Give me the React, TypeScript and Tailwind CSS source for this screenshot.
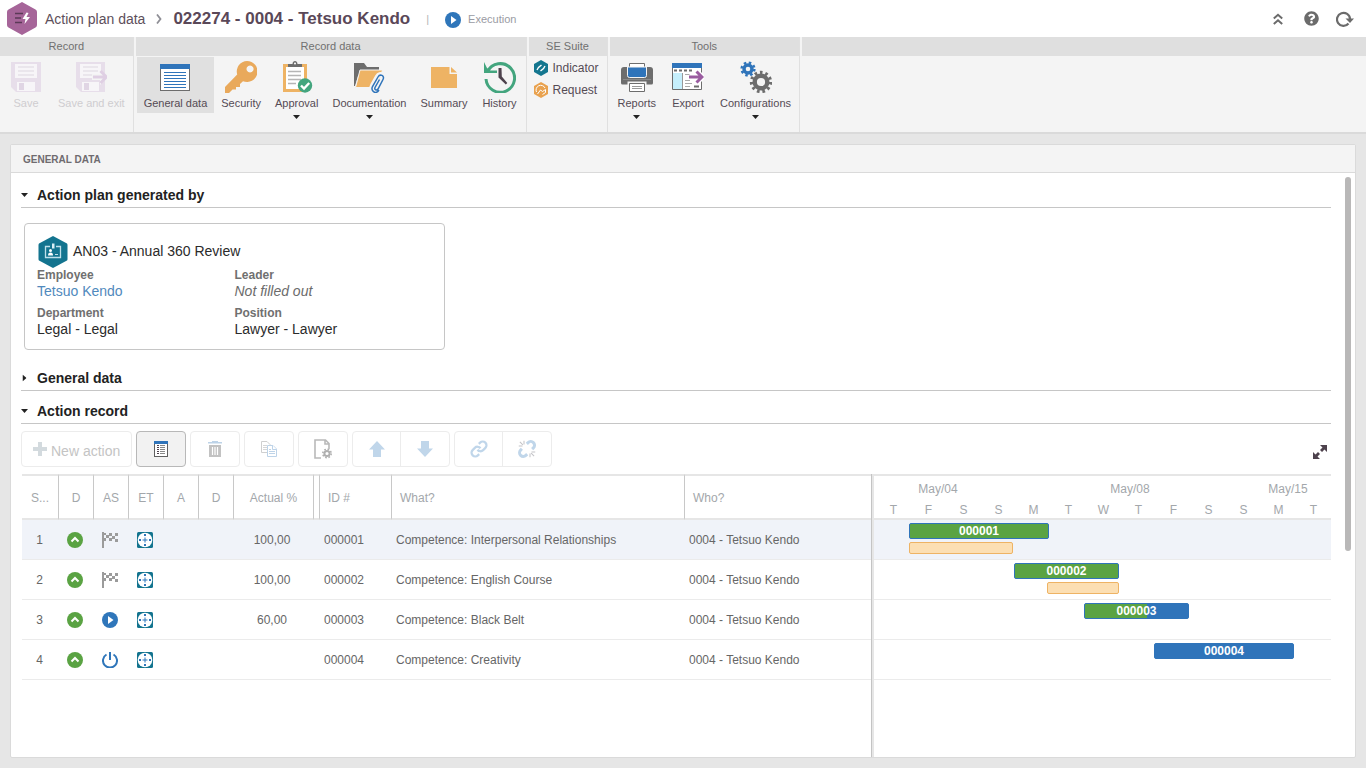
import React from 'react';
import { FaQuestionCircle } from 'react-icons/fa';

type IconProps = { className?: string };

/* ---------- header icons ---------- */

const LogoIcon = () => (
  <svg width="30" height="33" viewBox="0 0 30 33">
    <path d="M15 0 L28.500 7.500 Q30 8.300 30 10 V23 Q30 24.700 28.500 25.500 L15 33 L1.500 25.500 Q0 24.700 0 23 V10 Q0 8.300 1.500 7.500 Z" fill="#a66599" />
    <path d="M8 11.500h8M8 16h6M8 20.500h7" stroke="#5b3a57" strokeWidth="1.600" />
    <path d="M19.500 10.500 L15.500 17 H18.500 L17.500 22 L23 15 H19.500 L21.500 11 Z" fill="#fff" />
  </svg>
);

const PlayCircle = ({ className }: IconProps) => (
  <svg width="16" height="16" viewBox="0 0 16 16" className={className}>
    <circle cx="8" cy="8" r="8" fill="#2f76ba" />
    <path d="M6 4 L11.500 8 L6 12 Z" fill="#fff" />
  </svg>
);

const CollapseIcon = () => (
  <svg width="10" height="12" viewBox="0 0 10 12" fill="none" stroke="#6b6b6b" strokeWidth="2">
    <path d="M.8 5.500 L5 1.800 L9.200 5.500M.8 11 L5 7.300 L9.200 11" />
  </svg>
);

const RefreshIcon = () => (
  <svg width="18" height="16" viewBox="0 0 18 16">
    <path d="M12.500 12.500 A6.500 6.500 0 1 1 14 8" fill="none" stroke="#6b6b6b" strokeWidth="2.200" />
    <path d="M9.500 7.500 H18 L14 12 Z" fill="#6b6b6b" />
  </svg>
);

/* ---------- ribbon icons ---------- */

const SaveIcon = () => (
  <svg width="32" height="32" viewBox="0 0 32 32">
    <path d="M1 1h30v30H6l-5-5z" fill="#e7deea" />
    <path d="M5 3h22v14H5z" fill="#f7f5f8" />
    <path d="M8 6h16M8 10h16M8 14h16" stroke="#ddd7e0" />
    <path d="M7 21h18v9H7z" fill="#f7f5f8" />
    <path d="M9 22h5v7H9z" fill="#e0d5e4" />
  </svg>
);

const SaveExitIcon = () => (
  <svg width="32" height="32" viewBox="0 0 32 32">
    <path d="M1 1h29v30H6l-5-5z" fill="#e7deea" />
    <path d="M5 3h21v14H5z" fill="#f7f5f8" />
    <path d="M8 6h15M8 10h15M8 14h10" stroke="#ddd7e0" />
    <path d="M7 21h17v9H7z" fill="#f7f5f8" />
    <path d="M9 22h5v7H9z" fill="#e0d5e4" />
    <path d="M17 13h8V8l8 8-8 8v-5h-8z" fill="#f4f4f4" />
    <path d="M18 16h13M25.500 10l6 6-6 6" fill="none" stroke="#dfcfe3" strokeWidth="3" />
  </svg>
);

const GeneralDataIcon = () => (
  <svg width="32" height="32" viewBox="0 0 32 32" shapeRendering="crispEdges">
    <path d="M1 3h30v27H1z" fill="#6d6d6d" />
    <path d="M2 8h28v21H2z" fill="#fff" />
    <path d="M1 3h30v5H1z" fill="#2f74ba" />
    <path d="M5 11.500h22M5 14.500h22M5 17.500h22M5 20.500h22M5 23.500h22M5 26.500h22" stroke="#2f74ba" strokeWidth="1" />
  </svg>
);

const KeyIcon = () => (
  <svg width="32" height="32" viewBox="0 0 32 32">
    <path
      fillRule="evenodd"
      fill="#e9a95b"
      d="M22 0a10.500 10.500 0 1 1-4 20.200L15 23v3h-4v2.500H7.500L4 32H0v-6L12.200 13.500A10.500 10.500 0 0 1 22 0zM25 4.500a3.500 3.500 0 1 0 .1 0z"
    />
  </svg>
);

const ApprovalIcon = () => (
  <svg width="32" height="32" viewBox="0 0 32 32">
    <path d="M2 3h24v28H2z" fill="#eeb364" />
    <path d="M5 6h18v22H5z" fill="#fff" />
    <path d="M7 10.500h13M7 14.500h13M7 18.500h13M7 22.500h8" stroke="#b5b5b5" strokeWidth="1.500" />
    <path d="M7 6V3h4.500c0-4 5-4 5 0H21v3z" fill="#6d6d6d" />
    <circle cx="14" cy="2.500" r="1" fill="#fff" />
    <circle cx="24" cy="24.500" r="7.200" fill="#43a57e" />
    <path d="M20 24.500l3 3 5.200-5.500" fill="none" stroke="#fff" strokeWidth="2.400" />
  </svg>
);

const DocumentationIcon = () => (
  <svg width="32" height="32" viewBox="0 0 32 32">
    <path d="M1 2h10l3 4h12v9H5L2 25H1z" fill="#6d6d6d" />
    <path d="M7 9h22.500L24 26.500H2.500z" fill="#eeb364" stroke="#f4f4f4" />
    <path d="M21 30.500c-3-1.500-2.500-4-1.500-6l5-9c2.500-4 8-1 6 3l-5.500 9.500c-1.500 2.500-4.500 1-3.500-1.500l5-8.500" fill="none" stroke="#f4f4f4" strokeWidth="5" />
    <path d="M26.500 18.500l-4.500 8c-1 2.500 1.800 3.300 3 1.500l5-9.500c2-4-3-6-5-2.500l-5.500 9.500c-1.500 3 .5 5.500 2.500 6 2 .2 3-1 4-2.500" fill="none" stroke="#2f74ba" strokeWidth="1.500" />
  </svg>
);

const SummaryIcon = () => (
  <svg width="32" height="32" viewBox="0 0 32 32">
    <path d="M3 6h18.500v7H29v14H3z" fill="#eeb364" />
    <path d="M23 6l6 5.500h-6z" fill="#eeb364" />
  </svg>
);

const HistoryIcon = () => (
  <svg width="32" height="32" viewBox="0 0 32 32">
    <path d="M3.500 10.500A14.300 14.300 0 1 1 2 18" fill="none" stroke="#43a57e" strokeWidth="3" />
    <path d="M0 1v11h13V9.500H6.500L3 7z" fill="#43a57e" />
    <path d="M14.500 7l3 0 .3 8.500 5.500 6.500-1.500 1.500-7.300-7z" fill="#4e424d" />
  </svg>
);

const PrinterIcon = () => (
  <svg width="32" height="32" viewBox="0 0 32 32">
    <path d="M0 9q0-3 3-3h26q3 0 3 3v13q0 1.500-1.500 1.500H1.500Q0 23.500 0 22z" fill="#6d6d6d" />
    <path d="M8.500 2.500h15v8h-15z" fill="#fff" stroke="#6d6d6d" />
    <path d="M6.500 6h19v8.500q0 2-2 2h-15q-2 0-2-2z" fill="#2f74ba" stroke="#f4f4f4" />
    <path d="M2 18.500h28" stroke="#8a8a8a" />
    <path d="M6.500 20.500h19V24h-19z" fill="#f4f4f4" />
    <path d="M8.500 22.500h15v8h-15z" fill="#fff" stroke="#6d6d6d" />
    <path d="M11 25.500h10M11 27.500h10" stroke="#999" />
  </svg>
);

const ExportIcon = () => (
  <svg width="32" height="32" viewBox="0 0 32 32">
    <path d="M.5 2.500h29v26H.5z" fill="#fff" stroke="#6d6d6d" />
    <path d="M0 2h30v5H0z" fill="#2f74ba" />
    <path d="M2 9.500h19" stroke="#6d6d6d" strokeWidth="2" strokeDasharray="3 2" />
    <path d="M1 12h9v16H1z" fill="#c5effc" />
    <path d="M10.500 12v16" stroke="#999" />
    <path d="M13 13.500h5M13 19.500h5M13 22.500h7M13 25.500h5" stroke="#aaa" />
    <path d="M22 25.500h5" stroke="#6d6d6d" strokeWidth="2" />
    <path d="M17 16h13M25 10.500l5.500 5.500-5.500 5.500" fill="none" stroke="#fff" strokeWidth="5" />
    <path d="M17 16h13M24.500 10.500l5.500 5.500-5.500 5.500" fill="none" stroke="#9a5ca0" strokeWidth="3" />
  </svg>
);

// toothed wheel, drawn as a dashed ring around a hollow hub
const ConfigIcon = () => (
  <svg width="32" height="32" viewBox="0 0 32 32" fill="none">
    <circle cx="8" cy="8" r="4" stroke="#2f74ba" strokeWidth="3.400" />
    <circle cx="8" cy="8" r="6.400" stroke="#2f74ba" strokeWidth="2.400" strokeDasharray="2.500 2.526" />
    <circle cx="21" cy="21" r="6.300" stroke="#6d6d6d" strokeWidth="4.400" />
    <circle cx="21" cy="21" r="9.600" stroke="#6d6d6d" strokeWidth="3.200" strokeDasharray="2.600 2.884" />
  </svg>
);

const IndicatorIcon = () => (
  <svg width="14" height="16" viewBox="0 0 14 16">
    <path d="M7 0l7 4v8l-7 4-7-4V4z" fill="#14768f" />
    <path d="M3 10l1.500-2.500L7.500 5M6.500 11l3-2.500L11 6" fill="none" stroke="#fff" strokeWidth="1.400" />
  </svg>
);

const RequestIcon = () => (
  <svg width="14" height="16" viewBox="0 0 14 16">
    <path d="M7 0l7 4v8l-7 4-7-4V4z" fill="#e9a24f" />
    <path d="M2.500 10a4.600 4.600 0 0 1 8.500-4M3.500 12l3-4 2 1.500 3-2v3l-3 2" fill="none" stroke="#fff" strokeWidth="1" />
  </svg>
);

/* ---------- content icons ---------- */

const BadgeIcon = () => (
  <svg width="30" height="32" viewBox="0 0 30 32">
    <path d="M15 0l14 7.500Q29.500 8 29.500 9v14q0 1-.5 1.500L15 32 1 24.500Q.5 24 .5 23V9q0-1 .5-1.500z" fill="#13748f" />
    <path d="M12 10.500H7.500v11h15v-11H18" fill="none" stroke="#bfe0ea" strokeWidth="1.300" />
    <path d="M14 7.500h2.500v5H14z" fill="#d9eef4" />
    <circle cx="12.500" cy="14.500" r="1.500" fill="#fff" />
    <path d="M10 19.500q0-3 2.500-3t2.500 3z" fill="#fff" />
    <path d="M17 18.500h3" stroke="#bfe0ea" />
  </svg>
);

const PlusIcon = () => (
  <svg width="14" height="14" viewBox="0 0 14 14">
    <path d="M5 0h4v5h5v4H9v5H5V9H0V5h5z" fill="#d3dade" />
  </svg>
);

const ListIcon = () => (
  <svg width="14" height="16" viewBox="0 0 14 16" shapeRendering="crispEdges">
    <path d="M0 0h14v16H0z" fill="#5f5f5f" />
    <path d="M1 3h12v12H1z" fill="#fff" />
    <path d="M0 0h14v3H0z" fill="#2f74ba" />
    <path d="M3 4.500h2M3 6.500h2M3 8.500h2M3 10.500h2M3 12.500h2" stroke="#4e424d" />
    <path d="M6 4.500h5M6 6.500h5M6 8.500h5M6 10.500h5M6 12.500h5" stroke="#888" />
  </svg>
);

const TrashIcon = () => (
  <svg width="14" height="16" viewBox="0 0 14 16">
    <path d="M0 1h4V0h6v1h4v1.500H0z" fill="#bdd3e8" />
    <path d="M1 4h12v12H1z" fill="#c2c2c2" />
    <path d="M4.500 6v8M7 6v8M9.500 6v8" stroke="#fff" strokeWidth="1.200" />
  </svg>
);

const CopyIcon = () => (
  <svg width="16" height="16" viewBox="0 0 16 16" fill="#fff">
    <path d="M.5 .5H6l3 3v8H.5z" stroke="#cfcfcf" />
    <path d="M2 4.500h4M2 6.500h4M2 8.500h4" stroke="#d6d6d6" />
    <path d="M6.500 4.500H12l3.500 3.500v7.500h-9z" stroke="#bdd3e8" />
    <path d="M11.500 4.500V8.500h4M8 8.500h2M8 10.500h6M8 12.500h6" stroke="#bdd3e8" />
  </svg>
);

const DocGearIcon = () => (
  <svg width="18" height="20" viewBox="0 0 18 20" fill="none">
    <path d="M7 19H1V1h10.500L15 4.500V10M11 1v4h4" stroke="#b9b9b9" strokeWidth="1.600" />
    <circle cx="13" cy="14.500" r="2.600" stroke="#b0b0b0" strokeWidth="2" />
    <circle cx="13" cy="14.500" r="4.200" stroke="#b0b0b0" strokeWidth="1.600" strokeDasharray="1.700 1.600" />
  </svg>
);

const ArrowIcon = ({ className }: IconProps) => (
  <svg width="16" height="16" viewBox="0 0 16 16" className={className}>
    <path d="M8 0l8 8.500h-4V16H4V8.500H0z" fill="#c0d6ea" />
  </svg>
);

const LinkIcon = () => (
  <svg width="18" height="18" viewBox="0 0 24 24" fill="none" stroke="#c0d6ea" strokeWidth="3">
    <path d="M10 13a5 5 0 0 0 7.540.540l3-3a5 5 0 0 0-7.070-7.070l-1.720 1.710" />
    <path d="M14 11a5 5 0 0 0-7.540-.540l-3 3a5 5 0 0 0 7.070 7.070l1.710-1.710" />
  </svg>
);

const UnlinkIcon = () => (
  <svg width="18" height="18" viewBox="0 0 24 24" fill="none">
    <path d="M18.840 12.250l1.720-1.710a5 5 0 0 0-7.090-7.070l-1.720 1.710M5.170 11.750l-1.710 1.710a5 5 0 0 0 7.070 7.070l1.710-1.710" stroke="#c0d6ea" strokeWidth="4" />
    <path d="M8 1v5M1 8h5M2.500 2.500l4 4M16 18v5M18 16h5M17.500 17.500l4 4" stroke="#c4c4c8" strokeWidth="1.400" />
  </svg>
);

const ExpandIcon = () => (
  <svg width="14" height="14" viewBox="0 0 14 14">
    <path d="M7 0h7v7l-2.500-2.500L9 7 7 5l2.500-2.500zM7 14H0V7l2.500 2.500L5 7l2 2-2.500 2.500z" fill="#4e424d" />
  </svg>
);

const UpCircle = () => (
  <svg width="16" height="16" viewBox="0 0 16 16">
    <circle cx="8" cy="8" r="8" fill="#5aa343" />
    <path d="M4.500 9.500L8 6l3.500 3.500" fill="none" stroke="#fff" strokeWidth="2" />
  </svg>
);

const FlagIcon = () => (
  <svg width="16" height="16" viewBox="0 0 16 16" fill="#9b9b9b" shapeRendering="crispEdges">
    <path d="M0 0h2v16H0zM2 1h2v2H2zM7 1h3v3H7zM13 1h3v3h-3zM4 3h3v3H4zM10 4h3v3h-3zM2 6h2v3H2zM7 6h3v3H7zM13 7h3v3h-3z" />
  </svg>
);

const PowerIcon = () => (
  <svg width="16" height="16" viewBox="0 0 16 16" fill="none" stroke="#2f76ba" strokeWidth="2">
    <path d="M4.500 2.500a7 7 0 1 0 7 0M8 0v8" />
  </svg>
);

const EffortIcon = () => (
  <svg width="16" height="16" viewBox="0 0 16 16">
    <rect width="16" height="16" rx="1.500" fill="#13748f" />
    <circle cx="8" cy="8" r="7.300" fill="#fff" />
    <path d="M8 5.500v5M5.500 8h5" stroke="#2f76ba" />
    <path d="M7 2h2v2H7zM7 12h2v2H7zM2 7h2v2H2zM12 7h2v2h-2z" fill="#2f76ba" />
  </svg>
);

const Caret = ({ className }: IconProps) => (
  <svg width="7" height="4" viewBox="0 0 7 4" className={className}>
    <path d="M0 0h7L3.500 4z" fill="#222" />
  </svg>
);

/* ---------- ribbon ---------- */

type RibbonItem = {
  label: string;
  icon: React.ReactNode;
  active?: boolean;
  disabled?: boolean;
  menu?: boolean;
};

const recordItems: RibbonItem[] = [
  { label: 'Save', icon: <SaveIcon />, disabled: true },
  { label: 'Save and exit', icon: <SaveExitIcon />, disabled: true },
];

const recordDataItems: RibbonItem[] = [
  { label: 'General data', icon: <GeneralDataIcon />, active: true },
  { label: 'Security', icon: <KeyIcon /> },
  { label: 'Approval', icon: <ApprovalIcon />, menu: true },
  { label: 'Documentation', icon: <DocumentationIcon />, menu: true },
  { label: 'Summary', icon: <SummaryIcon /> },
  { label: 'History', icon: <HistoryIcon /> },
];

const toolItems: RibbonItem[] = [
  { label: 'Reports', icon: <PrinterIcon />, menu: true },
  { label: 'Export', icon: <ExportIcon /> },
  { label: 'Configurations', icon: <ConfigIcon />, menu: true },
];

const RibbonButton = ({ item }: { item: RibbonItem }) => (
  <button
    disabled={item.disabled}
    className={`flex min-w-[50px] flex-col items-center px-[7px] pt-1 pb-0.5 ${item.active ? 'bg-[#e0e0e0]' : ''} ${item.disabled ? 'text-[#cfcdd0]' : 'text-[#554b54]'}`}
  >
    {item.icon}
    <span className="mt-0.5 text-[11px] leading-4 whitespace-nowrap">{item.label}</span>
    {item.menu && <Caret className="mt-1" />}
  </button>
);

const RibbonGroup = ({ title, children }: { title: string; children: React.ReactNode }) => (
  <section className="flex flex-col border-r border-[#e0e0e0]">
    <h2 className="h-[19px] bg-[#dfdfdf] text-center text-[11px] leading-[19px] text-[#707070]">{title}</h2>
    <div className="flex flex-1 items-start px-px pt-px">{children}</div>
  </section>
);

const Ribbon = () => (
  <nav className="flex h-[97px] gap-0.5 border-b-2 border-[#dadada] bg-[#f4f4f4]">
    <RibbonGroup title="Record">
      {recordItems.map((item) => <RibbonButton key={item.label} item={item} />)}
    </RibbonGroup>
    <RibbonGroup title="Record data">
      {recordDataItems.map((item) => <RibbonButton key={item.label} item={item} />)}
    </RibbonGroup>
    <RibbonGroup title="SE Suite">
      <div className="flex flex-col pr-[7px] pl-1 text-xs text-[#554b54]">
        <button className="flex h-[22px] items-center gap-[5px]"><IndicatorIcon />Indicator</button>
        <button className="flex h-[22px] items-center gap-[5px]"><RequestIcon />Request</button>
      </div>
    </RibbonGroup>
    <RibbonGroup title="Tools">
      {toolItems.map((item) => <RibbonButton key={item.label} item={item} />)}
    </RibbonGroup>
    <div className="h-[19px] flex-1 bg-[#dfdfdf]" />
  </nav>
);

const Header = () => (
  <header className="flex h-[37px] items-center bg-white pr-3 pl-[7px]">
    <LogoIcon />
    <span className="ml-2 text-sm text-[#5d4f5b]">Action plan data</span>
    <svg width="6" height="10" viewBox="0 0 6 10" className="mx-[11px]">
      <path d="M1 .5L4.500 5 1 9.500" fill="none" stroke="#8f8f96" strokeWidth="1.800" />
    </svg>
    <h1 className="text-[17px] font-bold text-[#5a4858]">022274 - 0004 - Tetsuo Kendo</h1>
    <div className="flex items-center pt-0.5 text-[11px]">
      <span className="mx-4 text-[#b5b5b5]">|</span>
      <PlayCircle />
      <span className="ml-[7px] text-[#9a9ba3]">Execution</span>
    </div>
    <div className="ml-auto flex items-center gap-[21px]">
      <button aria-label="Collapse"><CollapseIcon /></button>
      <button aria-label="Help"><FaQuestionCircle size={15} color="#6b6b6b" /></button>
      <button aria-label="Refresh" className="-ml-1"><RefreshIcon /></button>
    </div>
  </header>
);

/* ---------- panel ---------- */

const SectionTitle = ({ title, open, className = '' }: { title: string; open?: boolean; className?: string }) => (
  <h3 className={`border-b border-[#c6c6c6] ${className}`}>
    <button className="flex h-6 items-center text-sm font-bold text-[#222]">
      <span className="flex w-4">
        <Caret className={open ? '' : '-rotate-90'} />
      </span>
      {title}
    </button>
  </h3>
);

const reviewFields = [
  { label: 'Employee', value: 'Tetsuo Kendo', style: 'text-[#5089bd]', href: '#' },
  { label: 'Leader', value: 'Not filled out', style: 'italic text-[#6b6b6b]' },
  { label: 'Department', value: 'Legal - Legal', style: 'text-[#2b2b2b]' },
  { label: 'Position', value: 'Lawyer - Lawyer', style: 'text-[#2b2b2b]' },
];

const ReviewCard = () => (
  <div className="mt-[15px] ml-[3px] w-[421px] rounded-sm border border-[#c6c6c6] p-3">
    <div className="flex h-[31px] items-center gap-[5px] pl-px">
      <BadgeIcon />
      <span className="pb-0.5 text-sm text-[#2b2b2b]">AN03 - Annual 360 Review</span>
    </div>
    <dl className="grid grid-cols-2 gap-y-1.5 leading-4">
      {reviewFields.map((field) => (
        <div key={field.label}>
          <dt className="text-xs leading-4 font-bold text-[#707070]">{field.label}</dt>
          <dd className={`text-sm leading-4 ${field.style}`}>
            {field.href ? <a href={field.href}>{field.value}</a> : field.value}
          </dd>
        </div>
      ))}
    </dl>
  </div>
);

const toolButton = 'flex h-9 w-[50px] items-center justify-center rounded-sm border border-[#ececec]';
const pairButton = 'flex w-12 items-center justify-center';

const Toolbar = () => (
  <div className="mt-[7px] flex items-center gap-1">
    <button disabled className="flex h-9 w-[111px] items-center gap-1 rounded-sm border border-[#ececec] pl-[11px] text-sm text-[#c4c4c4]">
      <PlusIcon />
      <span className="pt-1">New action</span>
    </button>
    <button aria-label="Details" className="flex h-9 w-[50px] items-center justify-center rounded-sm border border-[#b8b8b8] bg-[#f2f2f2]">
      <ListIcon />
    </button>
    <button disabled aria-label="Delete" className={toolButton}><TrashIcon /></button>
    <button disabled aria-label="Copy" className={toolButton}><CopyIcon /></button>
    <button disabled aria-label="Settings" className={toolButton}><DocGearIcon /></button>
    <div className="flex h-9 divide-x divide-[#ececec] rounded-sm border border-[#ececec]">
      <button disabled aria-label="Move up" className={pairButton}><ArrowIcon /></button>
      <button disabled aria-label="Move down" className={pairButton}><ArrowIcon className="rotate-180" /></button>
    </div>
    <div className="flex h-9 divide-x divide-[#ececec] rounded-sm border border-[#ececec]">
      <button disabled aria-label="Link" className={pairButton}><LinkIcon /></button>
      <button disabled aria-label="Unlink" className={pairButton}><UnlinkIcon /></button>
    </div>
    <button aria-label="Expand" className="mr-1 ml-auto pt-1.5"><ExpandIcon /></button>
  </div>
);

type Action = {
  id: string;
  status: React.ReactNode;
  actual: string;
  what: string;
  // gantt offsets and widths, in pixels at 35px a day
  start: number;
  width: number;
  done: number;
  planned?: { start: number; width: number };
};

const who = '0004 - Tetsuo Kendo';

const actions: Action[] = [
  { id: '000001', status: <FlagIcon />, actual: '100,00', what: 'Competence: Interpersonal Relationships', start: 35, width: 140, done: 100, planned: { start: 35, width: 104 } },
  { id: '000002', status: <FlagIcon />, actual: '100,00', what: 'Competence: English Course', start: 140, width: 105, done: 100, planned: { start: 173, width: 72 } },
  { id: '000003', status: <PlayCircle />, actual: '60,00', what: 'Competence: Black Belt', start: 210, width: 105, done: 60 },
  { id: '000004', status: <PowerIcon />, actual: '', what: 'Competence: Creativity', start: 280, width: 140, done: 0 },
];

const days = ['T', 'F', 'S', 'S', 'M', 'T', 'W', 'T', 'F', 'S', 'S', 'M', 'T'];

const th = 'border-r border-[#c8c8c8] font-normal';

const ActionTable = () => (
  <table className="w-full table-fixed border-separate border-spacing-0 text-xs text-[#666]">
    <colgroup>
      <col className="w-[37px]" />
      <col className="w-[35px]" />
      <col className="w-[35px]" />
      <col className="w-[35px]" />
      <col className="w-[35px]" />
      <col className="w-[35px]" />
      <col className="w-[80px]" />
      <col className="w-[6px]" />
      <col className="w-[72px]" />
      <col className="w-[293px]" />
      <col />
    </colgroup>
    <thead className="text-[#a3a7ab]">
      <tr className="h-[46px] [&>th]:border-y-2 [&>th]:border-y-[#e6e6e6] [&>th]:pt-0.5">
        <th className={th}>S...</th>
        <th className={th}>D</th>
        <th className={th}>AS</th>
        <th className={th}>ET</th>
        <th className={th}>A</th>
        <th className={th}>D</th>
        <th className={th}>Actual %</th>
        <th className={th} />
        <th className={`${th} pl-2 text-left`}>ID #</th>
        <th className={`${th} pl-2 text-left`}>What?</th>
        <th className="pl-2 text-left font-normal">Who?</th>
      </tr>
    </thead>
    <tbody>
      {actions.map((action, i) => (
        <tr key={action.id} className={`h-10 [&>td]:border-b [&>td]:border-[#ebebeb] ${i === 0 ? 'bg-[#f0f3f9]' : ''}`}>
          <td className="pr-0.5 text-center">{i + 1}</td>
          <td><div className="flex justify-center pr-1"><UpCircle /></div></td>
          <td><div className="flex justify-center pr-1">{action.status}</div></td>
          <td><div className="flex justify-center pr-1"><EffortIcon /></div></td>
          <td />
          <td />
          <td className="pr-1 text-center">{action.actual}</td>
          <td />
          <td className="pl-1">{action.id}</td>
          <td className="pl-1">{action.what}</td>
          <td className="pl-1">{who}</td>
        </tr>
      ))}
    </tbody>
  </table>
);

const Gantt = () => (
  <div className="w-[457px] shrink-0 text-xs">
    <div className="h-[46px] border-y-2 border-[#e6e6e6] pl-0.5 text-center text-[#a3a7ab]">
      <div className="flex h-[26px] items-center">
        <span className="w-[124px]">May/04</span>
        <span className="w-[260px]">May/08</span>
        <span className="w-14">May/15</span>
      </div>
      <div className="flex h-4 items-center">
        {days.map((day, i) => <span key={i} className="w-[35px] shrink-0">{day}</span>)}
      </div>
    </div>
    {actions.map((action, i) => (
      <div key={action.id} className={`h-10 border-b border-[#ebebeb] pt-[3px] ${i === 0 ? 'bg-[#f0f3f9]' : ''}`}>
        <div
          className="relative h-4 overflow-hidden rounded-xs border border-[#2f74ba] bg-[#2f74ba] text-center leading-[14px] font-bold text-white"
          style={{ marginLeft: action.start, width: action.width }}
        >
          <div className="absolute inset-y-0 left-0 bg-[#5aa343]" style={{ width: `${action.done}%` }} />
          <span className="relative">{action.id}</span>
        </div>
        {action.planned && (
          <div
            className="mt-[3px] h-3 rounded-xs border border-[#eeb364] bg-[#fcdfb3]"
            style={{ marginLeft: action.planned.start, width: action.planned.width }}
          />
        )}
      </div>
    ))}
  </div>
);

const App = () => {
  return (
    <div className="flex min-h-screen flex-col bg-[#e6e6e6] font-['Liberation_Sans',Arial,sans-serif]">
      <Header />
      <Ribbon />

      <main className="m-[10px] flex flex-1 flex-col rounded-xs border border-[#dadada] bg-white">
        <h2 className="h-7 border-b border-[#dadada] bg-[#f4f4f4] pl-3 text-[10px] leading-[29px] font-bold text-[#6f6b6f]">GENERAL DATA</h2>

        <div className="flex flex-1">
          <div className="flex min-w-0 flex-1 flex-col pt-2.5 pl-[10px]">
            <SectionTitle title="Action plan generated by" open />
            <ReviewCard />
            <SectionTitle title="General data" className="mt-4" />
            <SectionTitle title="Action record" open className="mt-2" />
            <Toolbar />

            {/* Grid and gantt share the row height */}
            <div className="mt-[7px] flex flex-1 pl-px">
              <div className="min-w-0 flex-1">
                <ActionTable />
              </div>
              <div className="w-[3px] border-l border-[#c4c4c4] bg-[#e6e6e6]" />
              <Gantt />
            </div>
          </div>

          {/* Scrollbar thumb */}
          <div className="mt-1 mr-1 ml-[14px] h-[374px] w-1.5 rounded-full bg-[#b9b8b8]" />
        </div>
      </main>
    </div>
  );
};

export default App;
